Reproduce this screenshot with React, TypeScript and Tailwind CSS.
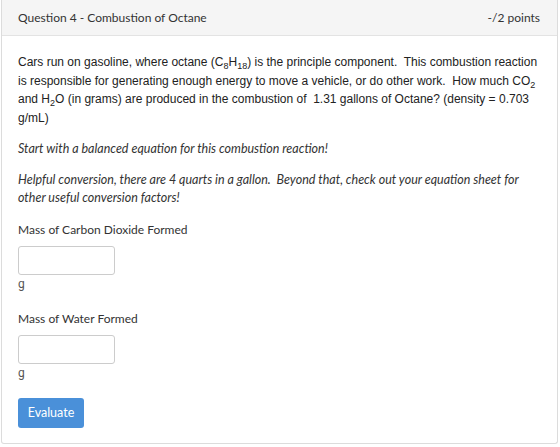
const Sub = ({ children }: { children: string }) => (
  <span className="relative top-[3px] text-[9px] leading-none">{children}</span>
);

export default function App() {
  return (
    <div className="w-[560px] h-[447px] bg-white font-['Lato',sans-serif] text-[#333] pl-[1px] pr-[2px] pb-[3px]">
      <div className="h-full border border-t-0 border-[#dcdcdc] rounded-b-[3px] flex flex-col">
        <div className="h-[36px] bg-[#f5f5f5] border-b border-[#e3e3e3] flex items-center justify-between pl-[16px] pr-[17px] text-[12px]">
          <span>Question 4 - Combustion of Octane</span>
          <span>-/2 points</span>
        </div>
        <div className="pl-[16px] pr-[14px] pt-[17px] flex flex-col items-start">
          <p className="font-['Liberation_Sans',Arial,sans-serif] text-[12px] leading-[18.5px] text-[#222]">
            Cars run on gasoline, where octane (C<Sub>8</Sub>H<Sub>18</Sub>) is the principle component.&nbsp; This combustion reaction is responsible for generating enough energy to move a vehicle, or do other work.&nbsp; How much CO<Sub>2</Sub> and H<Sub>2</Sub>O (in grams) are produced in the combustion of&nbsp; 1.31 gallons of Octane? (density = 0.703 g/mL)
          </p>
          <p className="italic text-[12.5px] leading-[18px] mt-[13px]">
            Start with a balanced equation for this combustion reaction!
          </p>
          <p className="italic text-[12.5px] leading-[18px] mt-[13px]">
            Helpful conversion, there are 4 quarts in a gallon.&nbsp; Beyond that, check out your equation sheet for other useful conversion factors!
          </p>
          <p className="text-[12px] leading-[18px] mt-[14px]">Mass of Carbon Dioxide Formed</p>
          <input className="mt-[7px] w-[97px] h-[29px] border border-[#ccc] rounded-[3px] bg-white" />
          <span className="font-['Roboto',sans-serif] text-[12px] leading-[18px] mt-0 text-[#555]">g</span>
          <p className="text-[12px] leading-[18px] mt-[17px]">Mass of Water Formed</p>
          <input className="mt-[7px] w-[97px] h-[29px] border border-[#ccc] rounded-[3px] bg-white" />
          <span className="font-['Roboto',sans-serif] text-[12px] leading-[18px] mt-0 text-[#555]">g</span>
          <button className="mt-[16px] w-[66px] h-[30px] bg-[#4a90d9] text-white text-[12.5px] rounded-[3px]">
            Evaluate
          </button>
        </div>
      </div>
    </div>
  );
}
